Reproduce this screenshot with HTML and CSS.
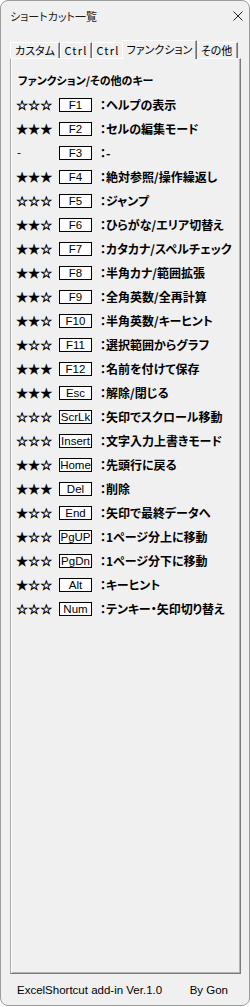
FILE: index.html
```html
<!DOCTYPE html>
<html lang="ja">
<head>
<meta charset="utf-8">
<title>ショートカット一覧</title>
<link rel="stylesheet" href="styles.css">
</head>
<body>
<div class="window">
  <div class="titlebar">
    <span class="title">ショートカット一覧</span>
    <svg class="close" width="10" height="10" viewBox="0 0 10 10"><path d="M0.5 0.5 L9.5 9.5 M9.5 0.5 L0.5 9.5" stroke="#222" stroke-width="1" fill="none"/></svg>
  </div>
  <div class="tabs">
    <div class="tab t1">カスタム</div>
    <div class="tab t2 latin">Ctrl</div>
    <div class="tab t3 latin">Ctrl</div>
    <div class="tab t4 active">ファンクション</div>
    <div class="tab t5">その他</div>
  </div>
  <div class="panel">
    <div class="heading">ファンクション/その他のキー</div>
    <div class="rows">
      <span class="stars">☆☆☆</span><span class="key">F1</span><span class="desc">：ヘルプの表示</span>
      <span class="stars">★★★</span><span class="key">F2</span><span class="desc">：セルの編集モード</span>
      <span class="stars dash">-</span><span class="key">F3</span><span class="desc">：-</span>
      <span class="stars">★★★</span><span class="key">F4</span><span class="desc">：絶対参照/操作繰返し</span>
      <span class="stars">☆☆☆</span><span class="key">F5</span><span class="desc">：ジャンプ</span>
      <span class="stars">★★☆</span><span class="key">F6</span><span class="desc">：ひらがな/エリア切替え</span>
      <span class="stars">★★☆</span><span class="key">F7</span><span class="desc">：カタカナ/スペルチェック</span>
      <span class="stars">★★☆</span><span class="key">F8</span><span class="desc">：半角カナ/範囲拡張</span>
      <span class="stars">★★☆</span><span class="key">F9</span><span class="desc">：全角英数/全再計算</span>
      <span class="stars">★★☆</span><span class="key">F10</span><span class="desc">：半角英数/キーヒント</span>
      <span class="stars">★☆☆</span><span class="key">F11</span><span class="desc">：選択範囲からグラフ</span>
      <span class="stars">★★★</span><span class="key">F12</span><span class="desc">：名前を付けて保存</span>
      <span class="stars">★★★</span><span class="key">Esc</span><span class="desc">：解除/閉じる</span>
      <span class="stars">☆☆☆</span><span class="key">ScrLk</span><span class="desc">：矢印でスクロール移動</span>
      <span class="stars">☆☆☆</span><span class="key">Insert</span><span class="desc">：文字入力上書きモード</span>
      <span class="stars">★★☆</span><span class="key">Home</span><span class="desc">：先頭行に戻る</span>
      <span class="stars">★★★</span><span class="key">Del</span><span class="desc">：削除</span>
      <span class="stars">★☆☆</span><span class="key">End</span><span class="desc">：矢印で最終データへ</span>
      <span class="stars">★☆☆</span><span class="key">PgUP</span><span class="desc">：1ページ分上に移動</span>
      <span class="stars">★☆☆</span><span class="key">PgDn</span><span class="desc">：1ページ分下に移動</span>
      <span class="stars">★☆☆</span><span class="key">Alt</span><span class="desc">：キーヒント</span>
      <span class="stars">☆☆☆</span><span class="key">Num</span><span class="desc">：テンキー・矢印切り替え</span>
    </div>
  </div>
  <div class="footer">
    <span>ExcelShortcut add-in Ver.1.0</span>
    <span>By Gon</span>
  </div>
</div>
</body>
</html>
```

FILE: styles.css
```css
html, body {
  margin: 0;
  padding: 0;
  background: #ffffff;
}
body {
  width: 250px;
  height: 1007px;
}
.window {
  box-sizing: border-box;
  width: 250px;
  height: 1006px;
  border: 1px solid #9c9c9c;
  border-radius: 8px;
  background: #f0f0f0;
  display: flex;
  flex-direction: column;
  overflow: hidden;
  font-family: "Noto Sans CJK JP", sans-serif;
  color: #000;
}
.titlebar {
  height: 29px;
  flex: none;
  display: flex;
  align-items: center;
  justify-content: space-between;
  padding: 0 6px 0 9px;
}
.title {
  font-size: 11px;
  line-height: 16px;
  font-feature-settings: "palt";
  color: #1a1a1a;
}
.tabs {
  flex: none;
  height: 18px;
  margin-top: 10px;
  padding-left: 9px;
  display: flex;
  align-items: flex-end;
}
.tab {
  box-sizing: border-box;
  height: 16px;
  border-top: 1px solid #ffffff;
  border-left: 1px solid #ffffff;
  border-right: 1px solid #6e6e6e;
  box-shadow: inset -1px 0 #a0a0a0;
  font-size: 11px;
  line-height: 14px;
  text-align: center;
  font-feature-settings: "palt";
  white-space: nowrap;
}
.t1 { width: 50px; }
.t2 { width: 32px; }
.t3 { width: 32px; }
.t4 { width: 71px; }
.t5 { width: 43px; }
.latin {
  letter-spacing: 1.2px;
}
.tab.active {
  width: 75px;
  height: 19px;
  margin: 0 -2px -1px;
  position: relative;
  z-index: 1;
  background: #f0f0f0;
  line-height: 16px;
}
.panel {
  flex: 1;
  margin: 0 8px 0 9px;
  border-top: 1px solid #ffffff;
  border-left: 1px solid #a8a8a8;
  border-right: 1px solid #7a7a7a;
  border-bottom: 1px solid #7a7a7a;
  box-shadow: inset 1px 0 #ffffff, inset -1px -1px #b4b4b4;
  padding: 13px 0 0 5px;
}
.heading {
  font-size: 11px;
  font-weight: 700;
  line-height: 16px;
  height: 16px;
  margin: 0 0 5px 2px;
  font-feature-settings: "palt";
}
.rows {
  display: grid;
  grid-template-columns: 43px 33px 1fr;
  grid-auto-rows: 24px;
  align-items: center;
}
.stars {
  font-family: "DejaVu Sans", sans-serif;
  font-size: 13.5px;
  line-height: 14px;
  white-space: nowrap;
  -webkit-text-stroke: 0.45px #000;
}
.stars.dash {
  padding-left: 1px;
  font-size: 11px;
  -webkit-text-stroke: 0;
}
.key {
  box-sizing: border-box;
  width: 33px;
  height: 14px;
  border: 1px solid #000;
  background: #fff;
  font-family: "Liberation Sans", Arial, sans-serif;
  font-size: 11.5px;
  line-height: 12px;
  text-align: center;
  white-space: nowrap;
  overflow: hidden;
}
.desc {
  margin-left: 8px;
  font-size: 12px;
  font-weight: 700;
  line-height: 16px;
  white-space: nowrap;
  font-feature-settings: "palt";
}
.footer {
  flex: none;
  height: 31px;
  display: flex;
  align-items: center;
  justify-content: space-between;
  padding: 0 21px 0 16px;
  font-family: "Liberation Sans", Arial, sans-serif;
  font-size: 11.5px;
  letter-spacing: 0;
  white-space: nowrap;
}
```
